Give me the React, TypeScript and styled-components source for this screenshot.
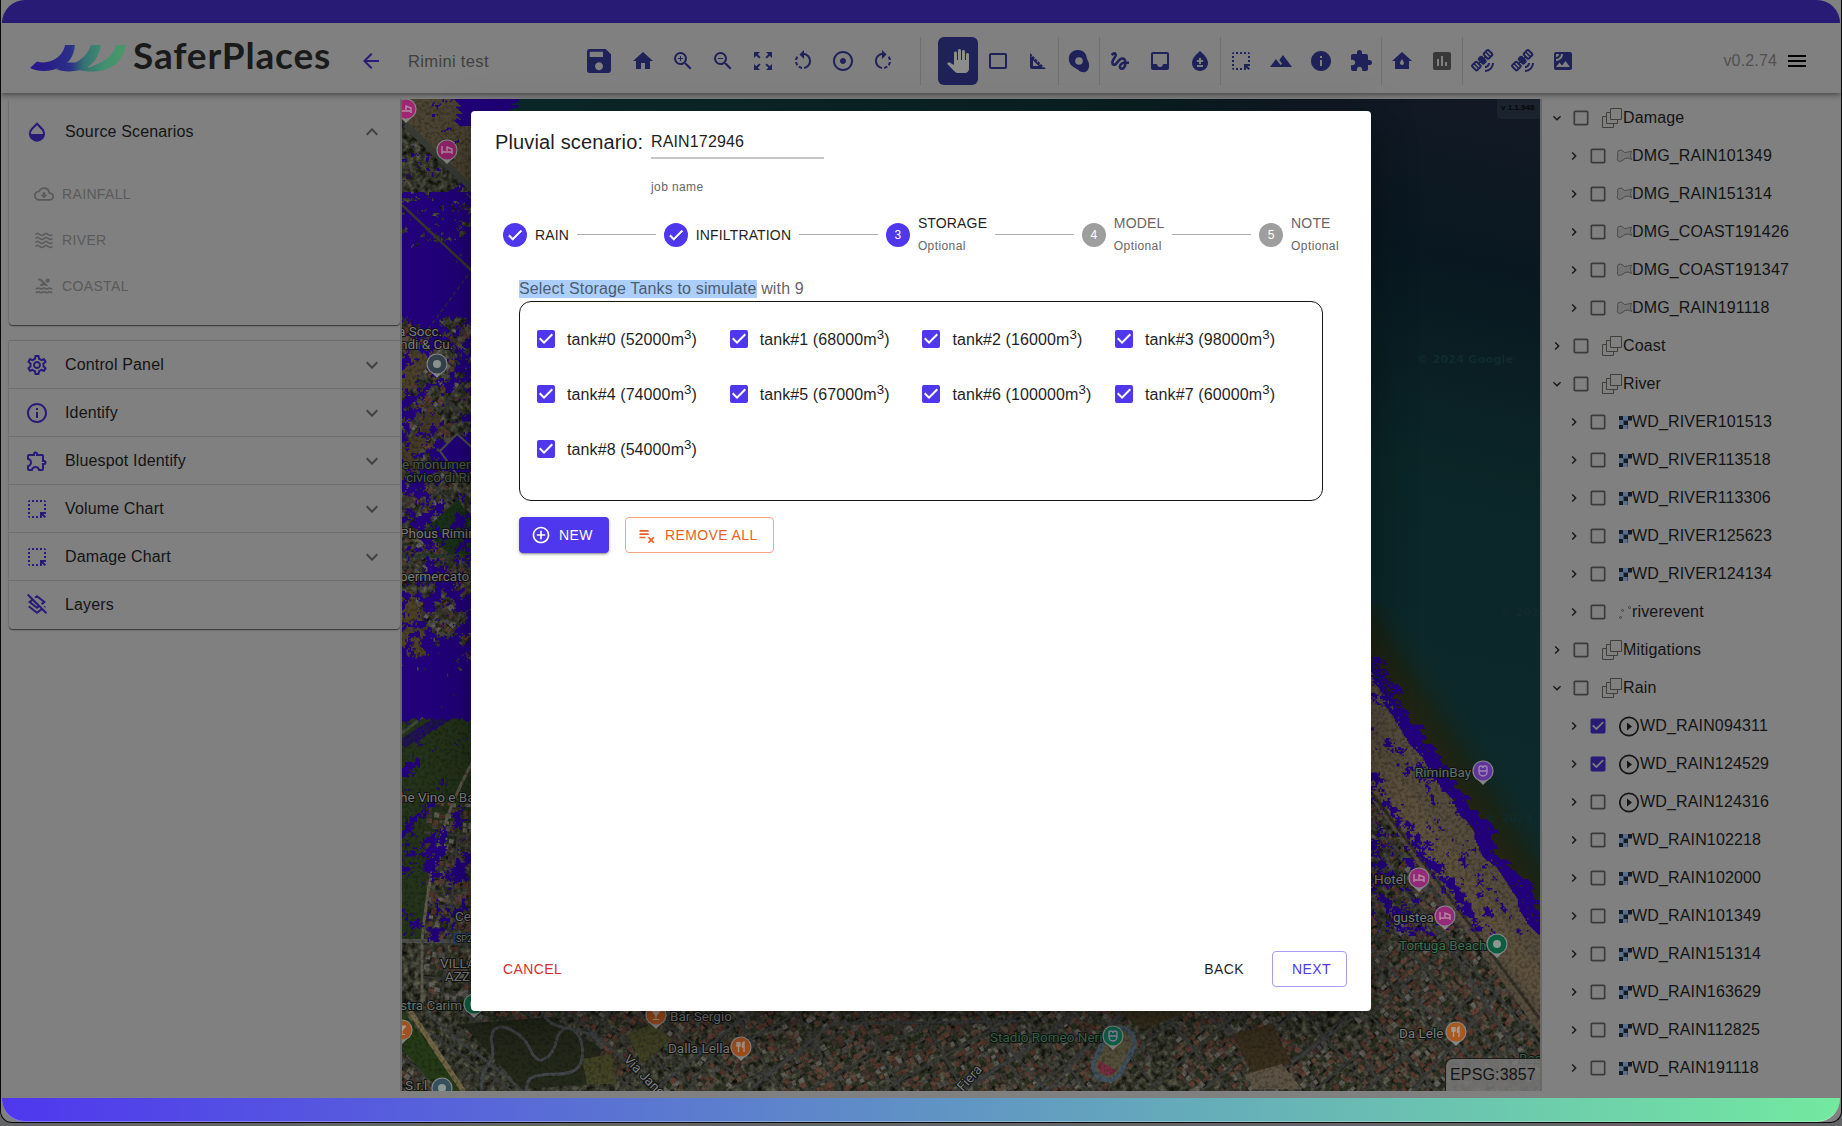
import React from "react";
import styled, { createGlobalStyle, css } from "styled-components";
import {
  MdSave, MdHome, MdZoomIn, MdZoomOut, MdZoomOutMap, MdRotateLeft, MdRotateRight, MdAdjust,
  MdPanTool, MdCrop54, MdSquareFoot, MdGesture, MdInbox, MdBloodtype, MdHighlightAlt, MdTerrain,
  MdInfo, MdExtension, MdWaterDamage, MdAssessment, MdSatelliteAlt, MdSatellite, MdMenu,
  MdArrowBack, MdOpacity, MdExpandLess, MdExpandMore, MdOutlineCloudDownload, MdPool,
  MdOutlineSettings, MdInfoOutline, MdOutlineExtension, MdOutlineLayersClear, MdChevronRight,
  MdCheckBox, MdCheckBoxOutlineBlank, MdAddCircleOutline, MdPlaylistRemove, MdCheck,
} from "react-icons/md";

const BRAND = "#4f37ee";
const INDIGO = "#1f2159";
const VIOLET = "#281b77";
const SURFACE = "#808080";

const Global = createGlobalStyle`
  * { box-sizing: border-box; }
  html, body { margin: 0; height: 1126px; overflow: hidden; background: #626465; }
  body {
    font-family: "Liberation Sans", Arial, sans-serif;
    font-size: 16px;
    letter-spacing: 0.15px;
    color: #141414;
  }
`;

/* ---------- shell ---------- */

const Window = styled.div`
  position: relative;
  width: 1842px;
  height: 1123px;
  display: flex;
  flex-direction: column;
  background: ${SURFACE};
  border: 1px solid #0a0a0a;
  border-top: 0;
  border-radius: 0 0 12px 12px;
  overflow: hidden;
`;
const TopStripe = styled.div`
  height: 23px;
  flex: none;
  margin: 0 1px;
  background: #271b75;
  border-radius: 23px 23px 0 0;
`;
const BottomStripe = styled.div`
  height: 24px;
  flex: none;
  margin: 0 1px;
  background: linear-gradient(90deg, #4f37ee, #6199c2 54%, #73e9a0);
  border-bottom: 1px solid rgba(255, 255, 255, 0.3);
  border-radius: 0 0 23px 23px;
`;
const Header = styled.header`
  height: 70px;
  flex: none;
  display: flex;
  align-items: center;
  padding: 6px 32px 0 29px;
  box-shadow: 0 2px 4px -1px rgba(0, 0, 0, 0.35), 0 4px 5px rgba(0, 0, 0, 0.14);
  z-index: 1;
`;
const Brand = styled.div`
  display: flex;
  align-items: center;
  width: 328px;
  margin-top: -6px;
`;
const BrandName = styled.span`
  font-family: Lato, sans-serif;
  font-weight: 700;
  font-size: 37px;
  line-height: 44px;
  letter-spacing: 0.85px;
  margin: -6px 0 0 6px;
  color: #1a1a1a;
`;
const Back = styled.div`
  display: flex;
  color: ${VIOLET};
  width: 49px;
  padding-left: 1px;
`;
const ProjectName = styled.span`
  width: 168px;
  padding: 1px 0 0 1px;
  font-size: 16.5px;
  color: #404040;
  letter-spacing: 0.35px;
`;
const Toolbar = styled.div`
  display: flex;
  align-items: center;
  color: ${INDIGO};
  height: 48px;
`;
const Tool = styled.span<{ $active?: boolean; $wide?: boolean; $muted?: boolean }>`
  width: ${(p) => (p.$wide ? 48 : 40)}px;
  height: 48px;
  display: flex;
  align-items: center;
  justify-content: center;
  font-size: ${(p) => (p.$wide ? 32 : 24)}px;
  ${(p) => p.$muted && css`color: #383838;`}
  ${(p) => p.$active && css`background: ${INDIGO}; color: #8d8d8d; border-radius: 6px;`}
`;
const Divider = styled.i<{ $gap?: boolean }>`
  width: 1px;
  height: 48px;
  background: #707070;
  ${(p) => p.$gap && css`margin: 0 17px 0 17px;`}
`;
const Version = styled.span`
  margin-left: auto;
  display: flex;
  align-items: center;
  gap: 8px;
  color: #515151;
  svg { color: #000; font-size: 24px; }
`;
const Main = styled.main`
  flex: 1;
  min-height: 0;
  display: flex;
  padding-top: 6px;
`;

/* ---------- sidebar ---------- */

const Sidebar = styled.aside`
  width: 399px;
  padding-left: 8px;
  display: flex;
  flex-direction: column;
  gap: 15px;
`;
const Card = styled.section`
  border-radius: 0 0 4px 4px;
  background: ${SURFACE};
  box-shadow: 0 1px 1px rgba(0, 0, 0, 0.5), 0 1px 3px rgba(0, 0, 0, 0.15);
`;
const Source = styled(Card)`
  height: 226px;
`;
const Panels = styled(Card)`
  padding-bottom: 1px;
`;
const PanelRow = styled.div<{ $tall?: boolean; $line?: boolean }>`
  height: ${(p) => (p.$tall ? 64 : 48)}px;
  display: flex;
  align-items: center;
  padding: 1px 16px 0;
  border-top: ${(p) => (p.$line ? "1px solid #6d6d6d" : "0")};
  > svg:first-child { color: ${VIOLET}; font-size: 24px; margin-right: 16px; }
  > svg:last-child { color: #404040; font-size: 24px; margin-left: auto; }
  > svg:only-of-type { margin-left: 0; color: ${VIOLET}; }
`;
const SourceItem = styled.div`
  height: 46px;
  display: flex;
  align-items: center;
  gap: 8px;
  padding-left: 25px;
  font-size: 14px;
  letter-spacing: 0.35px;
  color: #5a5a5a;
  svg { font-size: 20px; }
`;
const SourceList = styled.div`
  padding-top: 8px;
`;

/* ---------- map ---------- */

const MapPane = styled.div`
  position: relative;
  width: 1142px;
  height: 992px;
  border: solid #686868;
  border-width: 0 2px;
  overflow: hidden;
  svg { display: block; }
`;
const MapVersion = styled.span`
  position: absolute;
  top: 0;
  right: 0;
  width: 43px;
  height: 20px;
  padding: 4px 0 0 4px;
  border-radius: 0 0 0 4px;
  background: #1b232e;
  color: #05070a;
  font: 700 8px/10px "Liberation Sans", sans-serif;
  letter-spacing: 0;
  white-space: nowrap;
`;
const Epsg = styled.span`
  position: absolute;
  right: 0;
  bottom: 0;
  width: 95px;
  height: 33px;
  padding-left: 4px;
  line-height: 32px;
  border: solid #1d1d1d;
  border-width: 1px 0 0 1px;
  border-radius: 8px 0 0 0;
  background: rgba(125, 125, 125, 0.8);
`;

/* ---------- layer tree ---------- */

const Tree = styled.aside`
  flex: 1;
  display: flex;
  flex-direction: column;
`;
const TreeRow = styled.div<{ $child?: boolean }>`
  height: 38px;
  flex: none;
  display: flex;
  align-items: center;
  padding-left: ${(p) => (p.$child ? 24 : 7)}px;
  white-space: nowrap;
`;
const Caret = styled.span`
  width: 16px;
  display: flex;
  font-size: 16px;
  margin-right: 6px;
`;
const Check = styled.span<{ $on?: boolean }>`
  display: flex;
  font-size: 20px;
  color: ${(p) => (p.$on ? VIOLET : "#3b3b3b")};
`;
const TreeIcon = styled.span<{ $kind: string }>`
  display: flex;
  margin-left: ${(p) => (p.$kind === "shape" ? 8 : p.$kind === "raster" || p.$kind === "play" ? 11 : 11)}px;
  margin-right: ${(p) => (p.$kind === "group" ? 1 : 0)}px;
`;

/* ---------- modal ---------- */

const Overlay = styled.div`
  position: absolute;
  inset: 0;
  display: flex;
  align-items: center;
  justify-content: center;
  z-index: 2;
`;
const Dialog = styled.div`
  width: 900px;
  height: 900px;
  margin-bottom: 1px;
  display: flex;
  flex-direction: column;
  background: #fff;
  color: #1f1f1f;
  border-radius: 4px;
  box-shadow: 0 11px 15px -7px rgba(0, 0, 0, 0.2), 0 24px 38px 3px rgba(0, 0, 0, 0.14),
    0 9px 46px 8px rgba(0, 0, 0, 0.12);
`;
const TitleRow = styled.div`
  display: flex;
  padding: 15px 24px 0;
  height: 96px;
`;
const Title = styled.h2`
  margin: 0;
  width: 156px;
  font-size: 20px;
  font-weight: 400;
  line-height: 33px;
`;
const Field = styled.div`
  width: 173px;
`;
const FieldValue = styled.div`
  height: 33px;
  line-height: 31px;
  border-bottom: 2px solid #c6c6c6;
`;
const FieldHint = styled.div`
  margin-top: 19px;
  font-size: 12px;
  line-height: 18px;
  letter-spacing: 0.4px;
  color: #666;
`;
const Stepper = styled.div`
  display: flex;
  align-items: center;
  height: 56px;
  padding: 0 32px;
`;
const Step = styled.div`
  display: flex;
  align-items: center;
  gap: 8px;
`;
const StepDot = styled.span<{ $on: boolean }>`
  width: 24px;
  height: 24px;
  border-radius: 50%;
  display: flex;
  align-items: center;
  justify-content: center;
  background: ${(p) => (p.$on ? BRAND : "#9e9e9e")};
  color: #fff;
  font-size: 12px;
  letter-spacing: 0;
  svg { font-size: 18px; }
  svg path:not([fill="none"]) { stroke: #fff; stroke-width: 1; }
`;
const StepText = styled.div<{ $on: boolean }>`
  font-size: 14px;
  line-height: 20px;
  letter-spacing: 0.15px;
  color: ${(p) => (p.$on ? "#1f1f1f" : "#666")};
`;
const Optional = styled.div`
  font-size: 12px;
  line-height: 20px;
  margin-top: 3px;
  letter-spacing: 0.4px;
  color: #666;
`;
const StepLine = styled.i`
  flex: 1;
  height: 1px;
  margin: 0 8px;
  background: #adadad;
`;
const Body = styled.div`
  padding: 17px 48px 0;
  flex: 1;
`;
const Caption = styled.div`
  height: 21px;
  line-height: 18px;
  color: #666;
  mark { background: #accefc; color: #4c5c70; display: inline-block; height: 18px; }
`;
const TankBox = styled.div`
  width: 804px;
  height: 200px;
  padding: 10px 14px;
  border: 1px solid #161616;
  border-radius: 12px;
  display: grid;
  grid-template-columns: repeat(4, 192.7px);
  grid-auto-rows: 55px;
`;
const Tank = styled.label`
  display: flex;
  align-items: center;
  gap: 9px;
  height: 55px;
  letter-spacing: 0.1px;
  white-space: nowrap;
  svg { font-size: 24px; color: ${BRAND}; flex: none; }
  span { padding-top: 1px; }
  sup { font-size: 13.3px; line-height: 0; vertical-align: super; }
`;
const Actions = styled.div`
  display: flex;
  gap: 16px;
  margin-top: 16px;
`;
const Footer = styled.div`
  display: flex;
  height: 60px;
  padding: 0 24px 24px 24px;
  align-items: center;
`;
const Button = styled.button<{ $kind: "solid" | "warn" | "danger" | "plain" | "outline" }>`
  height: 36px;
  border: 0;
  border-radius: 4px;
  background: none;
  font: 400 14px "Liberation Sans", Arial, sans-serif;
  letter-spacing: 0.4px;
  display: flex;
  align-items: center;
  white-space: nowrap;
  svg { font-size: 20px; margin-right: 8px; flex: none; }
  ${(p) => p.$kind === "solid" && css`
    width: 90px; padding: 0 12px; color: #fff; background: ${BRAND};
    box-shadow: 0 3px 1px -2px rgba(0,0,0,.2), 0 2px 2px rgba(0,0,0,.14), 0 1px 5px rgba(0,0,0,.12);`}
  ${(p) => p.$kind === "warn" && css`
    width: 149px; padding: 0 11px; color: #ea5f24; border: 1px solid #f4a683;`}
  ${(p) => p.$kind === "danger" && css`color: #d32f2f; padding: 0 8px;`}
  ${(p) => p.$kind === "plain" && css`color: #1f1f1f; margin-left: auto; padding: 0 8px; margin-right: 20px;`}
  ${(p) => p.$kind === "outline" && css`
    width: 75px; padding: 0 0 0 19px; color: ${BRAND}; border: 1px solid #a79bf6;`}
`;

/* ---------- terrain drawing ---------- */

function hash(x: number, y: number, s = 0) {
  let h = (x * 374761393 + y * 668265263 + s * 982451653) | 0;
  h = Math.imul(h ^ (h >>> 13), 1274126177);
  return ((h ^ (h >>> 16)) >>> 0) / 4294967295;
}
function noise(x: number, y: number, s = 0) {
  const xi = Math.floor(x), yi = Math.floor(y);
  const fx = x - xi, fy = y - yi;
  const u = fx * fx * (3 - 2 * fx), v = fy * fy * (3 - 2 * fy);
  const a = hash(xi, yi, s), b = hash(xi + 1, yi, s);
  const c = hash(xi, yi + 1, s), d = hash(xi + 1, yi + 1, s);
  return a + (b - a) * u + (c - a) * v + (a - b - c + d) * u * v;
}

// Coordinates below are local to the map pane.
const coastX = (y: number) => 999 + (y - 621) * 0.66 + (noise(y / 14, 1, 3) - 0.5) * 10;
const townX = (y: number) => 970 + (y - 704) * 0.78;

function runs(x0: number, y0: number, x1: number, y1: number, step: number, on: (x: number, y: number) => boolean) {
  let d = "";
  for (let y = y0; y < y1; y += step) {
    let start = -1;
    for (let x = x0; x <= x1; x += step) {
      const hit = x < x1 && on(x, y);
      if (hit && start < 0) start = x;
      if (!hit && start >= 0) {
        d += `M${start} ${y}h${x - start}v${step}h${start - x}z`;
        start = -1;
      }
    }
  }
  return d;
}

const LEFT_DENSITY: [number, number][] = [
  [0, 0.1], [80, 0.3], [92, 0.5], [135, 0.66], [155, 1], [210, 1], [225, 0.45], [260, 0.36],
  [330, 0.42], [380, 0.46], [440, 0.3], [490, 0.42], [530, 0.5], [570, 0.75], [600, 0.95], [616, 0.95],
  [622, 0.12], [650, 0.12], [700, 0.2], [760, 0.24], [830, 0.16], [842, 0], [993, 0],
];
function leftDensity(y: number) {
  for (let i = 1; i < LEFT_DENSITY.length; i++) {
    const [y1, v1] = LEFT_DENSITY[i];
    const [y0, v0] = LEFT_DENSITY[i - 1];
    if (y <= y1) return v0 + ((v1 - v0) * (y - y0)) / (y1 - y0);
  }
  return 0;
}

const floodLeft = runs(0, 0, 72, 842, 1.5, (x, y) => {
  const n = 0.42 * noise((x + y) / 12, (x - y) / 34, 5) + 0.4 * noise(x / 5, y / 5, 6) + 0.18 * hash(Math.round(x * 2), Math.round(y * 2), 7);
  if (y < 92) return x > 52 + (y % 7) && y < 26 ? n < 0.75 : n < 0.2 + y / 900;
  return n < 0.24 + leftDensity(y) * 0.6;
});
const floodTop = runs(60, 0, 117, 13.5, 1.5, (x, y) => x + y * 0.4 < 108 + noise(y, 2) * 14);
const floodRight = runs(969, 558, 1138.5, 837, 1.5, (x, y) => {
  const c = coastX(y);
  const bx = Math.floor(x / 6), by = Math.floor(y / 5);
  if (x > c - 4) {
    const w = 8 + hash(0, by, 9) * 14;
    return x < c + w && hash(Math.round(x), Math.round(y), 2) > (y < 610 ? 0.25 : 0.03);
  }
  const t = townX(y);
  const n = 0.36 * noise((x - y * 0.66) / 9, y / 24, 11) + 0.42 * noise(x / 5, y / 5, 12) + 0.22 * hash(Math.round(x * 2), Math.round(y * 2), 8);
  const near = Math.exp(-Math.pow((x - t - 12) / 16, 2));
  return n < 0.31 + near * 0.22 + (x < t - 30 ? 0.12 : 0) - (y > 770 ? 0.03 : 0) + (hash(bx, by, 5) - 0.5) * 0.05;
});

type Layers = Record<string, string>;
const ROOFS = ["#57382e", "#614034", "#453330", "#5c463b", "#4c4846", "#3d3530", "#64605b", "#54342b", "#2b3120"];
function roofs(x0: number, y0: number, x1: number, y1: number, angle: number, seed: number, skip: (x: number, y: number) => boolean) {
  const out: Layers = {};
  const ca = Math.cos(angle), sa = Math.sin(angle);
  const cx = (x0 + x1) / 2, cy = (y0 + y1) / 2;
  const r = Math.hypot(x1 - x0, y1 - y0) / 2;
  const step = 6;
  for (let i = Math.floor(-r / step); i < r / step; i++)
    for (let j = Math.floor(-r / step); j < r / step; j++) {
      if (((i % 9) + 9) % 9 === 0 || ((j % 6) + 6) % 6 === 0) continue;
      const u = i * step + (hash(i, j, seed) - 0.5) * 2;
      const v = j * step + (hash(i, j, seed + 1) - 0.5) * 2;
      const x = cx + u * ca - v * sa, y = cy + u * sa + v * ca;
      if (x < x0 || x > x1 || y < y0 || y > y1 || skip(x, y)) continue;
      if (hash(i, j, seed + 2) < 0.1) continue;
      const w = 3.2 + hash(i, j, seed + 3) * 2.8, h = 3 + hash(i, j, seed + 4) * 2.8;
      const c = ROOFS[Math.floor(hash(i, j, seed + 5) * ROOFS.length)];
      const ux = w * ca, uy = w * sa, vx = -h * sa, vy = h * ca;
      out[c] = (out[c] || "") + `M${x.toFixed(1)} ${y.toFixed(1)}l${ux.toFixed(1)} ${uy.toFixed(1)} ${vx.toFixed(1)} ${vy.toFixed(1)} ${(-ux).toFixed(1)} ${(-uy).toFixed(1)}z`;
    }
  return out;
}
// Straight street lines that follow the same rotated grid as the roofs.
function streets(x0: number, y0: number, x1: number, y1: number, angle: number) {
  const ca = Math.cos(angle), sa = Math.sin(angle);
  const cx = (x0 + x1) / 2, cy = (y0 + y1) / 2;
  const r = Math.hypot(x1 - x0, y1 - y0) / 2;
  let d = "";
  const line = (u0: number, v0: number, u1: number, v1: number) => {
    d += `M${(cx + u0 * ca - v0 * sa).toFixed(1)} ${(cy + u0 * sa + v0 * ca).toFixed(1)}L${(cx + u1 * ca - v1 * sa).toFixed(1)} ${(cy + u1 * sa + v1 * ca).toFixed(1)}`;
  };
  for (let k = -Math.ceil(r / 54); k <= r / 54; k++) line(k * 54 + 2, -r, k * 54 + 2, r);
  for (let k = -Math.ceil(r / 36); k <= r / 36; k++) line(-r, k * 36 + 2, r, k * 36 + 2);
  return d;
}
const offTown = (x: number, y: number) => x > townX(y);
type District = { box: [number, number, number, number]; angle: number; seed: number; skip: (x: number, y: number) => boolean };
const DISTRICTS: District[] = [
  { box: [0, 215, 72, 560], angle: 0.75, seed: 20, skip: (x, y) => noise(x / 30, y / 26, 4) > 0.62 },
  { box: [22, 700, 72, 912], angle: 0.1, seed: 30, skip: () => false },
  { box: [28, 908, 330, 993], angle: 0.62, seed: 40, skip: (x, y) => noise(x / 40, y / 30, 1) > 0.66 || (x < 200 && y > 930) },
  { box: [0, 950, 44, 993], angle: 0.62, seed: 45, skip: (x, y) => x > (y - 920) * 0.62 },
  { box: [330, 908, 620, 993], angle: -0.5, seed: 50, skip: (x, y) => noise(x / 40, y / 30, 2) > 0.76 },
  { box: [620, 908, 960, 993], angle: -0.7, seed: 60, skip: (x, y) => noise(x / 40, y / 30, 3) > 0.78 },
  { box: [960, 690, 1138, 993], angle: 0.85, seed: 70, skip: offTown },
];
const ROOF_LAYERS = DISTRICTS.map(({ box, angle, seed, skip }) => roofs(...box, angle, seed, skip));

function Pin({ x, y, color, glyph }: { x: number; y: number; color: string; glyph?: "fork" | "bed" | "dot" | "bar" | "face" }) {
  return (
    <g transform={`translate(${x} ${y})`}>
      <path d="M-5 9 0 14 5 9z" fill="#858787" />
      <circle r="10.6" fill="#858787" />
      <circle r="9.4" fill={color} />
      {glyph === "dot" && <circle r="4" fill="#8d9693" />}
      {glyph === "fork" && <path d="M-4-5v4h3v-4M-2.5-5V5M3 5V-5q-2 1-1.500 5H3" fill="none" stroke="#a99a8c" strokeWidth="1.4" />}
      {glyph === "bar" && <path d="M-4-4h8L0 1zM0 0v4M-3 4.500h6" fill="#a99a8c" stroke="#a99a8c" />}
      {glyph === "bed" && <path d="M-5-4V4M-5 2H5V-1L0-3V1M5 4V0" fill="none" stroke="#b58aa2" strokeWidth="1.4" />}
      {glyph === "face" && <path d="M-4-3a2 2 0 1 1 4 0 2 2 0 1 1 4 0V1a4 4 0 0 1-8 0zM-4 0H4" fill="none" stroke="#9b86ae" strokeWidth="1.4" />}
    </g>
  );
}

const MapLabel = styled.text<{ $tone?: string; $small?: boolean }>`
  font: 400 ${(p) => (p.$small ? 9 : 13.5)}px Roboto, sans-serif;
  letter-spacing: 0;
  fill: ${(p) => p.$tone || "#7c7c7c"};
  stroke: #101312;
  stroke-width: 2px;
  paint-order: stroke;
`;
const Watermark = styled.text`
  font: 700 11px "DejaVu Sans", sans-serif;
  letter-spacing: 0.3px;
  fill: #102b2d;
`;

function Terrain() {
  return (
    <svg width="1138" height="993" viewBox="0 0 1138 993">
      <defs>
        <linearGradient id="sea" x1="0.75" y1="0.9" x2="1" y2="0">
          <stop offset="0" stopColor="#0d2a2c" />
          <stop offset="0.5" stopColor="#0b2628" />
          <stop offset="0.78" stopColor="#091820" />
          <stop offset="1" stopColor="#131925" />
        </linearGradient>
        <linearGradient id="shore" gradientUnits="userSpaceOnUse" x1="1030" y1="660" x2="1080" y2="627">
          <stop offset="0" stopColor="#26230f" />
          <stop offset="0.45" stopColor="#172418" />
          <stop offset="1" stopColor="#0d2a2c" stopOpacity="0" />
        </linearGradient>
        <linearGradient id="topsea" gradientUnits="userSpaceOnUse" x1="60" y1="0" x2="900" y2="0">
          <stop offset="0" stopColor="#0d2a2c" />
          <stop offset="0.8" stopColor="#0b2022" />
          <stop offset="1" stopColor="#0b2022" stopOpacity="0" />
        </linearGradient>
        <filter id="ground" x="0" y="0" width="100%" height="100%" colorInterpolationFilters="sRGB">
          <feTurbulence type="fractalNoise" baseFrequency="0.16" numOctaves="4" seed="4" />
          <feColorMatrix values="0.5 0 0 0 -0.035  0.48 0.03 0 0 -0.035  0.42 0 0 0 -0.035  0 0 0 0 1" />
        </filter>
        <filter id="grain" x="0" y="0" width="100%" height="100%" colorInterpolationFilters="sRGB">
          <feTurbulence type="fractalNoise" baseFrequency="0.3" numOctaves="2" seed="8" />
          <feColorMatrix values="0 0 0 0 0.03  0 0 0 0 0.04  0 0 0 0 0.03  3 0 0 0 -1.3" />
        </filter>
        <clipPath id="land">
          <path d="M0 0H60L117 14 900 470 969 572 999 621 1138 832V993H0z" />
        </clipPath>
      </defs>
      <rect width="1138" height="993" filter="url(#ground)" />

      {/* fields and river bank on the western edge */}
      <path d="M0 0H72V95L0 20z" fill="#4c4433" />
      <path d="M0 610 72 575V720L30 760 22 842H0z" fill="#24331a" />
      <path d="M0 645 72 600" stroke="#20164f" strokeWidth="10" />
      <path d="M0 634 72 578" stroke="#3d4a3a" strokeWidth="3" />
      {DISTRICTS.map(({ box: [x0, y0, x1, y1], angle, seed }) => (
        <svg key={seed} x={x0} y={y0} width={x1 - x0} height={y1 - y0} viewBox={`${x0} ${y0} ${x1 - x0} ${y1 - y0}`}>
          <path d={streets(x0, y0, x1, y1, angle)} stroke="#3b3b3a" strokeWidth="2.4" fill="none" />
        </svg>
      ))}
      {ROOF_LAYERS.map((layer, i) =>
        Object.keys(layer).map((c) => <path key={i + c} d={layer[c]} fill={c} />)
      )}
      <path d="M0 265 40 228 48 236 0 300z" fill="#4a402c" />
      <path d="M0 350 30 310 40 318 0 380z" fill="#443a28" />
      <path d="M22 432 56 400 72 425V458H50z" fill="#1b3318" />
      <path d="M0 495 10 490 32 560H0z" fill="#4c4127" />
      <path d="M0 457H72" stroke="#2c3a2c" strokeWidth="4" />
      <path d="M72 660Q50 700 38 740T20 842V912" fill="none" stroke="#5d594b" strokeWidth="3" />
      <path d="M0 842H72" stroke="#4d4d49" strokeWidth="4" />
      <path d="M0 910 62 993H38L0 950z" fill="#263a17" />
      <path d="M8 912 62 993" stroke="#716546" strokeWidth="5" />
      <path d="M24 912C60 950 90 960 120 993" fill="none" stroke="#3f4342" strokeWidth="3" />
      <path d="M60 925 150 918 200 950 190 985 120 990z" fill="#242a1b" />
      <path d="M80 993C75 960 95 975 90 945S120 930 128 950 150 960 155 940 185 930 180 960 120 960 125 993M140 912C150 940 190 920 200 950" fill="none" stroke="#42464a" strokeWidth="3" />

      {/* main roads */}
      <g fill="none" stroke="#3e3f3f" strokeWidth="3">
        <path d="M165 912 260 993M250 993 350 912M345 993 430 925 620 922M575 912 645 993 720 912M560 993 690 905M760 912 815 910 872 993M800 912 900 993M850 993 960 912" />
        <path d="M969 800 1040 835 1138 990M1000 740 1138 905M969 850 1100 993M969 720 1080 850 1138 920M1010 993 1100 890" />
      </g>
      <path d="M830 935 870 925 890 965 850 975z" fill="#3c3120" />
      <path d="M845 975 880 965 900 990H850z" fill="#5d5344" />
      <path d="M715 912H790L740 930z" fill="#3b3420" />
      <path d="M225 935 250 925 270 940 240 965zM180 960 210 955 215 985H185z" fill="#434326" />
      <g transform="translate(712 955) rotate(28)">
        <rect x="-17" y="-30" width="34" height="60" rx="17" fill="#42525e" />
        <rect x="-12" y="-25" width="24" height="50" rx="12" fill="#56513c" />
        <path d="M-10 13a10 10 0 0 0 20 0z" fill="#752f40" />
      </g>

      {/* beach, shore and sea */}
      <path d="M969 560 999 621 1138 832V935L969 700z" fill="#564c3d" />
      <path d="M969 640 1138 870V905L969 690z" fill="#61543f" opacity="0.7" />
      <path d="M969 693 1138 920" stroke="#333028" strokeWidth="3" />
      <path d="M60 0H1138V832L999 621 969 572 900 470 117 14z" fill="url(#sea)" />
      <rect x="60" width="840" height="14" fill="url(#topsea)" />
      <path d="M940 500 1060 520 1138 650V834L999 621z" fill="url(#shore)" />
      <rect width="1138" height="993" filter="url(#grain)" clipPath="url(#land)" opacity="0.3" />

      {/* flooded cells */}
      <g fill="#22007a">
        <path d={floodLeft} />
        <path d={floodTop} />
        <path d={floodRight} />
      </g>
      <path d="M3 25 72 92" stroke="#383a34" strokeWidth="6" />
      <path d="M0 106 70 172" fill="none" stroke="#37352b" strokeWidth="2.5" />
      <path d="M66 176 15 245" fill="none" stroke="#2c2840" strokeWidth="1.5" strokeDasharray="4 3" />
      <path d="M38 352 55 335 72 350V372L58 380z" fill="#22007a" stroke="#4d4d48" strokeWidth="2" />

      <Watermark x="1015" y="264">© 2024 Google</Watermark>
      <Watermark x="1098" y="517">© 2024 Google</Watermark>
      <Watermark x="1084" y="723">© 2024 Google</Watermark>

      <MapLabel x="-4" y="237">a Socc.</MapLabel>
      <MapLabel x="-2" y="250">ndi &amp; Cu.</MapLabel>
      <MapLabel x="0" y="370" $tone="#4a5c46">e monumen</MapLabel>
      <MapLabel x="4" y="383" $tone="#4a5c46">civico di Rimini</MapLabel>
      <MapLabel x="-2" y="439">Phous Rimini</MapLabel>
      <MapLabel x="-2" y="482">permercato</MapLabel>
      <MapLabel x="-2" y="703">he Vino e Bar</MapLabel>
      <MapLabel x="53" y="822">Ce</MapLabel>
      <rect x="51" y="834" width="24" height="10" rx="2" fill="#1e3c66" />
      <MapLabel x="54" y="843" $small>SP2</MapLabel>
      <MapLabel x="38" y="869">VILLA</MapLabel>
      <MapLabel x="43" y="882">AZZURRA</MapLabel>
      <MapLabel x="-2" y="911" $tone="#66736a">stra Carim</MapLabel>
      <MapLabel x="3" y="991">S.r.l</MapLabel>
      <MapLabel x="268" y="922">Bar Sergio</MapLabel>
      <MapLabel x="266" y="954">Dalla Lella</MapLabel>
      <MapLabel x="0" y="0" transform="translate(221 961) rotate(46)">Via Jano</MapLabel>
      <MapLabel x="0" y="0" transform="translate(561 993) rotate(-48)">Fiera</MapLabel>
      <MapLabel x="588" y="943" $tone="#3c6a4c">Stadio Romeo Neri</MapLabel>
      <MapLabel x="1013" y="678" $tone="#5d7562">RiminBay</MapLabel>
      <MapLabel x="972" y="785">Hotel</MapLabel>
      <MapLabel x="991" y="823">gustea</MapLabel>
      <MapLabel x="997" y="851" $tone="#3f7050">Tortuga Beach</MapLabel>
      <MapLabel x="997" y="939">Da Lele</MapLabel>
      <MapLabel x="1117" y="964" $tone="#3f5c48">Bag</MapLabel>

      <Pin x={4} y={10} color="#a02674" glyph="bed" />
      <Pin x={45} y={51} color="#8f2367" glyph="bed" />
      <Pin x={35} y={265} color="#35424b" glyph="dot" />
      <Pin x={72} y={905} color="#0c5f40" glyph="dot" />
      <Pin x={0} y={931} color="#a2501e" glyph="bar" />
      <Pin x={40} y={989} color="#35505c" glyph="dot" />
      <Pin x={254} y={916} color="#a2501e" glyph="bar" />
      <Pin x={339} y={948} color="#a2501e" glyph="fork" />
      <Pin x={711} y={937} color="#10674a" glyph="face" />
      <Pin x={1081} y={672} color="#60349c" glyph="face" />
      <Pin x={1017} y={779} color="#942a78" glyph="bed" />
      <Pin x={1043} y={817} color="#942a78" glyph="bed" />
      <Pin x={1095} y={845} color="#0b5d40" glyph="dot" />
      <Pin x={1054} y={933} color="#a85920" glyph="fork" />
    </svg>
  );
}

/* ---------- small drawings ---------- */

const Waves = () => (
  <svg width="97" height="30" viewBox="0 0 97 30">
    <defs>
      <linearGradient id="wave" gradientUnits="userSpaceOnUse" x1="10" y1="0" x2="90" y2="0">
        <stop offset="0" stopColor="#29198a" />
        <stop offset="0.38" stopColor="#2b2f86" />
        <stop offset="0.55" stopColor="#347273" />
        <stop offset="0.8" stopColor="#429070" />
        <stop offset="1" stopColor="#48966a" />
      </linearGradient>
    </defs>
    <g fill="url(#wave)">
      <path d="M0 25 7 18.500C10 19.500 14 19.800 17 19 28 17 34 9 35 2H45C44 13 39 20 31 24 20 29.500 8 29 0 25z" />
      <path d="M26 26C44 23 57 15 61 2H71C69 14 62 24 51 27 42 29 32 29 26 26z" />
      <path d="M50 27C70 22 83 15 86 2H96C93 17 84 26 69 28 61 29 54 28.500 50 27z" />
      <path d="M31 20.500C38 19 48 19 56 21L60 27 28 26z" />
    </g>
  </svg>
);
const Ring = () => (
  <svg width="24" height="24" viewBox="0 0 24 24" fill="currentColor">
    <path fillRule="evenodd" d="M9 1.200C13 .500 16.500 2 18.200 4.500 19.800 7 19.300 8.800 20.800 11.500 22.800 15 22.500 19.500 20 22 17 24 14 23.200 12.500 22 10.500 20.200 8.500 19.300 6.500 18 2.500 15.500 1.500 12 2 8 2.500 4.500 5.500 1.800 9 1.200zM12 8.200a3.800 3.800 0 1 0 0 7.600 3.800 3.800 0 0 0 0-7.600z" />
  </svg>
);
const RiverWaves = () => (
  <svg width="1em" height="1em" viewBox="0 0 20 20" fill="none" stroke="currentColor" strokeWidth="1.500">
    <path d="M1.500 4.500q2.100-2 4.250 0t4.250 0 4.250 0 4.250 0M1.500 8.500q2.100-2 4.250 0t4.250 0 4.250 0 4.250 0M1.500 12.500q2.100-2 4.250 0t4.250 0 4.250 0 4.250 0M1.500 16.500q2.100-2 4.250 0t4.250 0 4.250 0 4.250 0" />
  </svg>
);
const GroupGlyph = () => (
  <svg width="20" height="20" viewBox="0 0 20 20" fill="#808080" stroke="#3f3f3b">
    <path d="M.5 8.500h11v11H.500z" /><path d="M4.500 4.500h11v11h-11z" /><path d="M8.500.500h11v11h-11z" />
  </svg>
);
const ShapeGlyph = () => (
  <svg width="16" height="14" viewBox="0 0 16 14" fill="#757575" stroke="#4c4c4c">
    <path d="M1.500 3.500Q1.500 1 4.500 1 6 1 8.500 3.500 11 3.500 15.500 2 13.500 6 15.500 10.500 12 8 9 9.500 6 12.500 3 12.500 .500 12 1.500 8.500 2 6 1.500 3.500z" />
  </svg>
);
const RasterGlyph = () => (
  <svg width="13" height="13" viewBox="0 0 13 13" shapeRendering="crispEdges">
    <path fill="#3c4d63" d="M0 0h13v5H9v8H0z" />
    <path fill="#141b27" d="M0 0h4v4H0zM9 0h4v4H9zM5 5h4v4H5zM0 9h4v4H0z" />
    <path fill="#5b6f8b" d="M4 0h5v4H4zM0 4h4v5H0zM4 9h4v4H4z" />
  </svg>
);
const PointsGlyph = () => (
  <svg width="13" height="15" viewBox="0 0 13 15" fill="none" stroke="#3d3d3d" strokeWidth="0.9">
    <circle cx="3.500" cy="5.500" r="1" /><circle cx="1.500" cy="12.500" r="1" /><circle cx="10.500" cy="2.500" r="1" />
  </svg>
);
const PlayGlyph = () => (
  <svg width="21" height="21" viewBox="0 0 21 21">
    <circle cx="10" cy="10.500" r="9.200" fill="none" stroke="#141414" strokeWidth="1.700" />
    <path d="M8 6.500 13 10.500 8 14.500z" fill="#141414" />
  </svg>
);
const GLYPHS: Record<string, React.FC> = {
  group: GroupGlyph, shape: ShapeGlyph, raster: RasterGlyph, points: PointsGlyph, play: PlayGlyph,
};

/* ---------- data ---------- */

type Node = { name: string; kind: string; open?: boolean; on?: boolean };
const children = (kind: string, names: string[], on = false): Node[] => names.map((name) => ({ name, kind, on }));
const NODES: Node[] = [
  { name: "Damage", kind: "group", open: true },
  ...children("shape", ["DMG_RAIN101349", "DMG_RAIN151314", "DMG_COAST191426", "DMG_COAST191347", "DMG_RAIN191118"]),
  { name: "Coast", kind: "group" },
  { name: "River", kind: "group", open: true },
  ...children("raster", ["WD_RIVER101513", "WD_RIVER113518", "WD_RIVER113306", "WD_RIVER125623", "WD_RIVER124134"]),
  ...children("points", ["riverevent"]),
  { name: "Mitigations", kind: "group" },
  { name: "Rain", kind: "group", open: true },
  ...children("play", ["WD_RAIN094311", "WD_RAIN124529"], true),
  ...children("play", ["WD_RAIN124316"]),
  ...children("raster", ["WD_RAIN102218", "WD_RAIN102000", "WD_RAIN101349", "WD_RAIN151314", "WD_RAIN163629", "WD_RAIN112825", "WD_RAIN191118"]),
];
const VOLUMES = [52000, 68000, 16000, 98000, 74000, 67000, 100000, 60000, 54000];
const STEPS = [
  { label: "RAIN", done: true, on: true },
  { label: "INFILTRATION", done: true, on: true },
  { label: "STORAGE", optional: true, on: true },
  { label: "MODEL", optional: true, on: false },
  { label: "NOTE", optional: true, on: false },
];
const PANELS = [
  { label: "Control Panel", Icon: MdOutlineSettings, more: true },
  { label: "Identify", Icon: MdInfoOutline, more: true },
  { label: "Bluespot Identify", Icon: MdOutlineExtension, more: true },
  { label: "Volume Chart", Icon: MdHighlightAlt, more: true },
  { label: "Damage Chart", Icon: MdHighlightAlt, more: true },
  { label: "Layers", Icon: MdOutlineLayersClear, more: false },
];
const NAV_TOOLS = [MdHome, MdZoomIn, MdZoomOut, MdZoomOutMap, MdRotateLeft, MdAdjust, MdRotateRight];
const TOOL_GROUPS: React.ComponentType[][] = [
  [Ring],
  [MdGesture, MdInbox, MdBloodtype],
  [MdHighlightAlt, MdTerrain, MdInfo, MdExtension],
  [MdWaterDamage, MdAssessment],
  [MdSatelliteAlt, MdSatelliteAlt, MdSatellite],
];

export default function App() {
  return (
    <>
      <Global />
      <Window>
        <TopStripe />
        <Header>
          <Brand><Waves /><BrandName>SaferPlaces</BrandName></Brand>
          <Back><MdArrowBack size={24} /></Back>
          <ProjectName>Rimini test</ProjectName>
          <Toolbar>
            <Tool $wide><MdSave /></Tool>
            {NAV_TOOLS.map((Icon, i) => <Tool key={i}><Icon /></Tool>)}
            <Divider $gap />
            <Tool $active><MdPanTool /></Tool>
            <Tool><MdCrop54 /></Tool>
            <Tool><MdSquareFoot /></Tool>
            {TOOL_GROUPS.map((group, g) => (
              <React.Fragment key={g}>
                <Divider />
                {group.map((Icon, i) => <Tool key={i} $muted={Icon === MdAssessment}><Icon /></Tool>)}
              </React.Fragment>
            ))}
          </Toolbar>
          <Version>v0.2.74<MdMenu /></Version>
        </Header>
        <Main>
          <Sidebar>
            <Source>
              <PanelRow $tall><MdOpacity />Source Scenarios<MdExpandLess /></PanelRow>
              <SourceList>
                <SourceItem><MdOutlineCloudDownload />RAINFALL</SourceItem>
                <SourceItem><RiverWaves />RIVER</SourceItem>
                <SourceItem><MdPool />COASTAL</SourceItem>
              </SourceList>
            </Source>
            <Panels>
              {PANELS.map(({ label, Icon, more }) => (
                <PanelRow key={label} $line><Icon />{label}{more && <MdExpandMore />}</PanelRow>
              ))}
            </Panels>
          </Sidebar>
          <MapPane>
            <Terrain />
            <MapVersion>v 1.1.948</MapVersion>
            <Epsg>EPSG:3857</Epsg>
          </MapPane>
          <Tree>
            {NODES.map((n) => {
              const Glyph = GLYPHS[n.kind];
              return (
                <TreeRow key={n.name} $child={n.kind !== "group"}>
                  <Caret>{n.open ? <MdExpandMore /> : <MdChevronRight />}</Caret>
                  <Check $on={n.on}>{n.on ? <MdCheckBox /> : <MdCheckBoxOutlineBlank />}</Check>
                  <TreeIcon $kind={n.kind}><Glyph /></TreeIcon>
                  {n.name}
                </TreeRow>
              );
            })}
          </Tree>
        </Main>
        <BottomStripe />
        <Overlay>
          <Dialog>
            <TitleRow>
              <Title>Pluvial scenario:</Title>
              <Field>
                <FieldValue>RAIN172946</FieldValue>
                <FieldHint>job name</FieldHint>
              </Field>
            </TitleRow>
            <Stepper>
              {STEPS.map((s, i) => (
                <React.Fragment key={s.label}>
                  {i > 0 && <StepLine />}
                  <Step>
                    <StepDot $on={s.on}>{s.done ? <MdCheck /> : i + 1}</StepDot>
                    <StepText $on={s.on}>{s.label}{s.optional && <Optional>Optional</Optional>}</StepText>
                  </Step>
                </React.Fragment>
              ))}
            </Stepper>
            <Body>
              <Caption><mark>Select Storage Tanks to simulate</mark> with 9</Caption>
              <TankBox>
                {VOLUMES.map((v, i) => (
                  <Tank key={i}><MdCheckBox /><span>tank#{i} ({v}m<sup>3</sup>)</span></Tank>
                ))}
              </TankBox>
              <Actions>
                <Button $kind="solid"><MdAddCircleOutline />NEW</Button>
                <Button $kind="warn"><MdPlaylistRemove />REMOVE ALL</Button>
              </Actions>
            </Body>
            <Footer>
              <Button $kind="danger">CANCEL</Button>
              <Button $kind="plain">BACK</Button>
              <Button $kind="outline">NEXT</Button>
            </Footer>
          </Dialog>
        </Overlay>
      </Window>
    </>
  );
}
